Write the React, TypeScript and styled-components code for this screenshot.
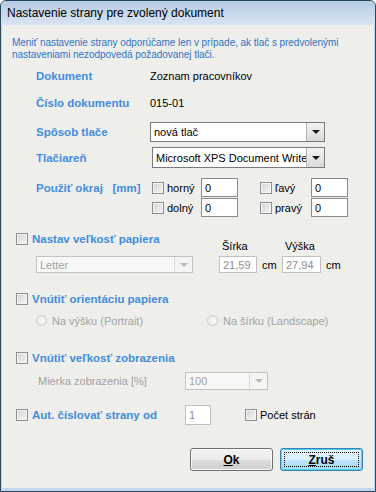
import React from 'react';
import styled, { createGlobalStyle } from 'styled-components';

const labelBlue = '#428de0';
const infoBlue = '#2f74c6';
const disabledText = '#a3a3a3';

const GlobalStyle = createGlobalStyle`
    html, body {
        margin: 0;
        padding: 0;
        background: #ffffff;
    }
    body {
        font-family: "Liberation Sans", Arial, sans-serif;
        font-size: 11px;
        color: #000000;
    }
`;

const Window = styled.div`
    width: 376px;
    height: 492px;
    box-sizing: border-box;
    display: flex;
    flex-direction: column;
    border: 1px solid #27465c;
    border-radius: 6px 6px 0 0;
    background: #c3d9ee;
    overflow: hidden;
`;

const TitleBar = styled.div`
    height: 24px;
    flex-shrink: 0;
    display: flex;
    align-items: center;
    padding-left: 6px;
    background: linear-gradient(#b7cce6, #d8e4f2);
    font-size: 12px;
`;

const Body = styled.div`
    flex: 1;
    margin: 0 1px 3px 1px;
    padding: 12px 11px 0 14px;
    background: #eeeeeb;
    display: flex;
    flex-direction: column;
`;

const Info = styled.p`
    margin: 0 0 0 -4px;
    color: ${infoBlue};
    line-height: 12px;
    font-size: 10px;
    letter-spacing: -0.05px;
    white-space: nowrap;
`;

interface RowProps {
    $h: number;
    $top: number;
    $indent?: number;
}

const Row = styled.div<RowProps>`
    display: flex;
    align-items: center;
    height: ${({ $h }) => $h}px;
    margin-top: ${({ $top }) => $top}px;
    padding-left: ${({ $indent }) => $indent || 0}px;
`;

const Label = styled.span<{ $w?: number; $ml?: number }>`
    width: ${({ $w }) => ($w ? `${$w}px` : 'auto')};
    margin-left: ${({ $ml }) => $ml || 0}px;
    flex-shrink: 0;
    color: ${labelBlue};
    font-weight: bold;
    font-size: 11.5px;
    white-space: nowrap;
`;

const Value = styled.span`
    white-space: nowrap;
`;

const Plain = styled.span<{ $disabled?: boolean; $ml?: number; $w?: number }>`
    width: ${({ $w }) => ($w ? `${$w}px` : 'auto')};
    flex-shrink: 0;
    margin-left: ${({ $ml }) => $ml || 0}px;
    color: ${({ $disabled }) => ($disabled ? disabledText : '#000')};
    white-space: nowrap;
`;

const Check = styled.span<{ $ml?: number }>`
    width: 12px;
    height: 12px;
    margin-left: ${({ $ml }) => $ml || 0}px;
    box-sizing: border-box;
    flex-shrink: 0;
    border: 1px solid #8e8f8f;
    background: linear-gradient(135deg, #d2d2d2, #f7f7f7);
    box-shadow: inset 0 0 0 1px #f4f4f4;
`;

const Radio = styled.span`
    width: 11px;
    height: 11px;
    box-sizing: border-box;
    flex-shrink: 0;
    border-radius: 50%;
    border: 1px solid #cbcbcb;
    background: radial-gradient(circle at 60% 60%, #fbfbfb, #e3e3e3);
`;

const Select = styled.div<{ $w: number; $h: number; $ml?: number; $disabled?: boolean }>`
    display: flex;
    width: ${({ $w }) => $w}px;
    height: ${({ $h }) => $h}px;
    margin-left: ${({ $ml }) => $ml || 0}px;
    box-sizing: border-box;
    border: 1px solid ${({ $disabled }) => ($disabled ? '#c2c2c2' : '#7a7a7a')};
    background: ${({ $disabled }) => ($disabled ? '#f7f7f6' : '#ffffff')};
    color: ${({ $disabled }) => ($disabled ? disabledText : '#000')};
`;

const SelectText = styled.span`
    flex: 1;
    display: flex;
    align-items: center;
    padding-left: 3px;
    overflow: hidden;
    white-space: nowrap;
`;

const DropButton = styled.span<{ $disabled?: boolean }>`
    width: 17px;
    flex-shrink: 0;
    display: flex;
    align-items: center;
    justify-content: center;
    border-left: 1px solid ${({ $disabled }) => ($disabled ? '#dadada' : '#b4b4b4')};
    background: ${({ $disabled }) =>
        $disabled ? '#f4f4f3' : 'linear-gradient(#f3f3f3, #d9d9d9)'};

    &::after {
        content: '';
        border-left: 4px solid transparent;
        border-right: 4px solid transparent;
        border-top: 4px solid ${({ $disabled }) => ($disabled ? '#b8b8b8' : '#1a1a1a')};
    }
`;

const Field = styled.div<{ $w: number; $h: number; $ml?: number; $disabled?: boolean }>`
    display: flex;
    align-items: center;
    width: ${({ $w }) => $w}px;
    height: ${({ $h }) => $h}px;
    margin-left: ${({ $ml }) => $ml || 0}px;
    box-sizing: border-box;
    padding-left: 3px;
    flex-shrink: 0;
    border: 1px solid ${({ $disabled }) => ($disabled ? '#c0c0c0' : '#8a8a8a')};
    background: #ffffff;
    color: ${({ $disabled }) => ($disabled ? '#8d8d8d' : '#000')};
`;

const MarginGrid = styled.div`
    display: grid;
    grid-template-columns: 116px 108px auto;
    grid-auto-rows: 19px;
    row-gap: 1px;
    margin-top: 10px;
    padding-left: 20px;
    align-items: center;
`;

const MarginItem = styled.div`
    display: grid;
    grid-template-columns: 15px 34px 37px;
    align-items: center;
    height: 19px;
`;

const PaperSection = styled.div`
    display: flex;
    margin-top: 15px;
`;

const PaperLeft = styled.div`
    width: 203px;
    display: flex;
    flex-direction: column;
`;

const PaperRight = styled.div`
    display: grid;
    grid-template-columns: 63px auto;
    grid-template-rows: 14px 17px;
    row-gap: 3px;
    margin-top: 7px;
    align-items: center;
`;

const SizeCaption = styled.span`
    padding-left: 3px;
`;

const SizeCell = styled.div`
    display: flex;
    align-items: center;
`;

const RadioItem = styled.div<{ $w?: number }>`
    display: flex;
    align-items: center;
    gap: 5px;
    width: ${({ $w }) => ($w ? `${$w}px` : 'auto')};
    color: ${disabledText};
`;

const Buttons = styled.div`
    display: flex;
    justify-content: flex-end;
    gap: 7px;
    margin-top: 23px;
`;

const Button = styled.button<{ $focused?: boolean }>`
    position: relative;
    width: 83px;
    height: 23px;
    padding: 0;
    border: 1px solid ${({ $focused }) => ($focused ? '#3c7fb1' : '#707070')};
    border-radius: 3px;
    background: ${({ $focused }) =>
        $focused
            ? 'linear-gradient(#eaf6fd 0%, #d9f0fc 50%, #bee6fd 51%, #a7d9f5 100%)'
            : 'linear-gradient(#f2f2f2 0%, #ebebeb 50%, #dddddd 51%, #cfcfcf 100%)'};
    box-shadow: inset 0 0 0 1px ${({ $focused }) => ($focused ? '#48d5f8' : '#fbfbfb')};
    font-family: "Liberation Sans", Arial, sans-serif;
    font-size: 12px;
    font-weight: bold;
    color: #000;

    &::after {
        content: '';
        display: ${({ $focused }) => ($focused ? 'block' : 'none')};
        position: absolute;
        inset: 3px;
        border: 1px dotted #000;
    }
`;

const Key = styled.u`
    text-decoration: underline;
`;

export default function App() {
    return (
        <>
            <GlobalStyle />
            <Window>
                <TitleBar>Nastavenie strany pre zvolený dokument</TitleBar>
                <Body>
                    <Info>
                        Meniť nastavenie strany odporúčame len v prípade, ak tlač s predvolenými
                        <br />
                        nastaveniami nezodpovedá požadovanej tlači.
                    </Info>

                    <Row $h={20} $top={5} $indent={20}>
                        <Label $w={114}>Dokument</Label>
                        <Value>Zoznam pracovníkov</Value>
                    </Row>
                    <Row $h={20} $top={7} $indent={20}>
                        <Label $w={114}>Číslo dokumentu</Label>
                        <Value>015-01</Value>
                    </Row>
                    <Row $h={20} $top={9} $indent={20}>
                        <Label $w={114}>Spôsob tlače</Label>
                        <Select $w={175} $h={20}>
                            <SelectText>nová tlač</SelectText>
                            <DropButton />
                        </Select>
                    </Row>
                    <Row $h={21} $top={5} $indent={20}>
                        <Label $w={114}>Tlačiareň</Label>
                        <Select $w={173} $h={21} $ml={2}>
                            <SelectText>Microsoft XPS Document Writer</SelectText>
                            <DropButton />
                        </Select>
                    </Row>

                    <MarginGrid>
                        <Label>
                            Použiť okraj &nbsp;&nbsp;[mm]
                        </Label>
                        <MarginItem>
                            <Check />
                            <span>horný</span>
                            <Field $w={37} $h={19}>0</Field>
                        </MarginItem>
                        <MarginItem>
                            <Check />
                            <span>ľavý</span>
                            <Field $w={37} $h={19} $ml={2}>0</Field>
                        </MarginItem>
                        <span />
                        <MarginItem>
                            <Check />
                            <span>dolný</span>
                            <Field $w={37} $h={19}>0</Field>
                        </MarginItem>
                        <MarginItem>
                            <Check />
                            <span>pravý</span>
                            <Field $w={37} $h={19} $ml={2}>0</Field>
                        </MarginItem>
                    </MarginGrid>

                    <PaperSection>
                        <PaperLeft>
                            <Row $h={14} $top={0}>
                                <Check />
                                <Label $ml={4}>Nastav veľkosť papiera</Label>
                            </Row>
                            <Row $h={17} $top={10} $indent={20}>
                                <Select $w={157} $h={17} $disabled>
                                    <SelectText>Letter</SelectText>
                                    <DropButton $disabled />
                                </Select>
                            </Row>
                        </PaperLeft>
                        <PaperRight>
                            <SizeCaption>Šírka</SizeCaption>
                            <SizeCaption>Výška</SizeCaption>
                            <SizeCell>
                                <Field $w={38} $h={17} $disabled>21,59</Field>
                                <Plain $ml={5}>cm</Plain>
                            </SizeCell>
                            <SizeCell>
                                <Field $w={39} $h={17} $disabled>27,94</Field>
                                <Plain $ml={5}>cm</Plain>
                            </SizeCell>
                        </PaperRight>
                    </PaperSection>

                    <Row $h={14} $top={19}>
                        <Check />
                        <Label $ml={4}>Vnútiť orientáciu papiera</Label>
                    </Row>
                    <Row $h={15} $top={7} $indent={20}>
                        <RadioItem $w={171}>
                            <Radio />
                            Na výšku (Portrait)
                        </RadioItem>
                        <RadioItem>
                            <Radio />
                            Na šírku (Landscape)
                        </RadioItem>
                    </Row>

                    <Row $h={14} $top={23}>
                        <Check />
                        <Label $ml={4}>Vnútiť veľkosť zobrazenia</Label>
                    </Row>
                    <Row $h={18} $top={7} $indent={22}>
                        <Plain $disabled $w={147}>Mierka zobrazenia [%]</Plain>
                        <Select $w={83} $h={18} $disabled>
                            <SelectText>100</SelectText>
                            <DropButton $disabled />
                        </Select>
                    </Row>

                    <Row $h={20} $top={15}>
                        <Check />
                        <Label $w={153} $ml={4}>Aut. číslovať strany od</Label>
                        <Field $w={26} $h={20} $disabled>1</Field>
                        <Check $ml={34} />
                        <Plain $ml={3}>Počet strán</Plain>
                    </Row>

                    <Buttons>
                        <Button>
                            <Key>O</Key>k
                        </Button>
                        <Button $focused>
                            <Key>Z</Key>ruš
                        </Button>
                    </Buttons>
                </Body>
            </Window>
        </>
    );
}
